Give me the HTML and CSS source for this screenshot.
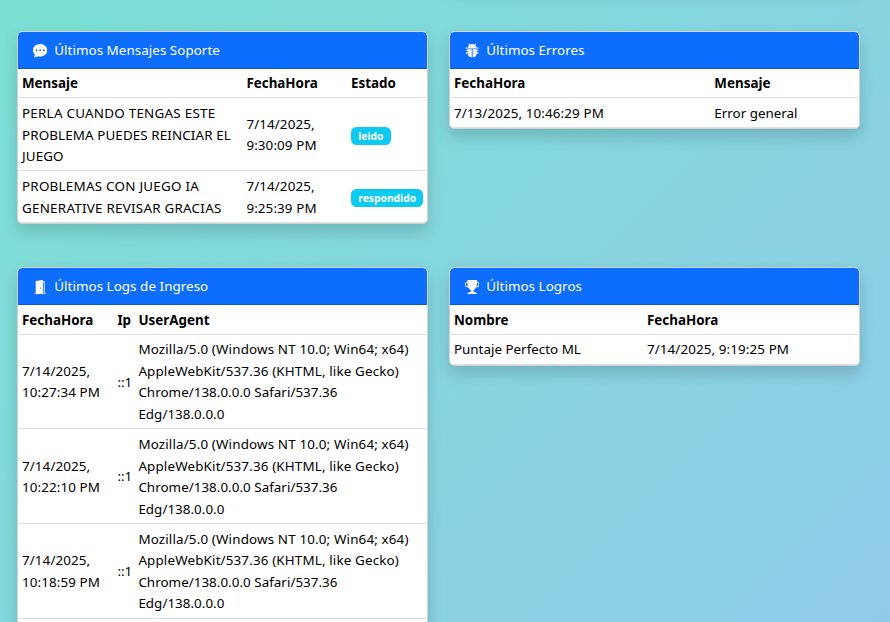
FILE: index.html
```html
<!DOCTYPE html>
<html lang="es">
<head>
<meta charset="utf-8">
<title>Panel</title>
<link rel="stylesheet" href="styles.css">
</head>
<body>
<main class="grid">
  <section class="card previous"></section>
  <section class="card previous"></section>

  <section class="card">
    <header class="card-header">
      <svg class="icon" viewBox="0 0 16 16"><path d="M16 8c0 3.866-3.582 7-8 7a9 9 0 0 1-2.347-.306c-.584.296-1.925.864-4.181 1.234-.2.032-.352-.176-.273-.362.354-.836.674-1.95.77-2.966C.744 11.37 0 9.76 0 8c0-3.866 3.582-7 8-7s8 3.134 8 7M5 8a1 1 0 1 0-2 0 1 1 0 0 0 2 0m4 0a1 1 0 1 0-2 0 1 1 0 0 0 2 0m3 1a1 1 0 1 0 0-2 1 1 0 0 0 0 2"/></svg>
      <span>Últimos Mensajes Soporte</span>
    </header>
    <table>
      <colgroup><col class="col-message"><col class="col-date"><col></colgroup>
      <thead><tr><th>Mensaje</th><th>FechaHora</th><th>Estado</th></tr></thead>
      <tbody>
        <tr><td><span class="wide">PERLA CUANDO TENGAS ESTE</span><br>PROBLEMA PUEDES REINCIAR EL<br>JUEGO</td><td>7/14/2025,<br>9:30:09 PM</td><td><span class="badge">leido</span></td></tr>
        <tr><td class="wide">PROBLEMAS CON JUEGO IA<br>GENERATIVE REVISAR GRACIAS</td><td>7/14/2025,<br>9:25:39 PM</td><td><span class="badge">respondido</span></td></tr>
      </tbody>
    </table>
  </section>

  <section class="card">
    <header class="card-header">
      <svg class="icon" viewBox="0 0 16 16"><path d="M4.978.855a.5.5 0 1 0-.956.29l.41 1.352A5 5 0 0 0 3 6h10a5 5 0 0 0-1.432-3.503l.41-1.352a.5.5 0 1 0-.956-.29l-.291.956A5 5 0 0 0 8 1a5 5 0 0 0-2.731.811l-.29-.956z"/><path d="M13 6v1H8.5v8.975A5 5 0 0 0 13 11h.5a.5.5 0 0 1 .5.5v.5a.5.5 0 1 0 1 0v-.5a1.5 1.5 0 0 0-1.5-1.5H13V9h1.5a.5.5 0 0 0 0-1H13V7h.5A1.5 1.5 0 0 0 15 5.5V5a.5.5 0 0 0-1 0v.5a.5.5 0 0 1-.5.5zm-5.5 9.975V7H3V6h-.5a.5.5 0 0 1-.5-.5V5a.5.5 0 0 0-1 0v.5A1.5 1.5 0 0 0 2.5 7H3v1H1.5a.5.5 0 0 0 0 1H3v1h-.5A1.5 1.5 0 0 0 1 11.5v.5a.5.5 0 1 0 1 0v-.5a.5.5 0 0 1 .5-.5H3a5 5 0 0 0 4.5 4.975"/></svg>
      <span>Últimos Errores</span>
    </header>
    <table>
      <colgroup><col class="col-error-date"><col></colgroup>
      <thead><tr><th>FechaHora</th><th>Mensaje</th></tr></thead>
      <tbody><tr><td>7/13/2025, 10:46:29 PM</td><td class="plain">Error general</td></tr></tbody>
    </table>
  </section>

  <section class="card">
    <header class="card-header">
      <svg class="icon" viewBox="0 0 16 16"><path d="M1.5 15a.5.5 0 0 0 0 1h13a.5.5 0 0 0 0-1H13V2.5A1.5 1.5 0 0 0 11.5 1H11V.5a.5.5 0 0 0-.57-.495l-7 1A.5.5 0 0 0 3 1.5V15zM11 2h.5a.5.5 0 0 1 .5.5V15h-1zm-2.5 8c-.276 0-.5-.448-.5-1s.224-1 .5-1 .5.448.5 1-.224 1-.5 1"/></svg>
      <span>Últimos Logs de Ingreso</span>
    </header>
    <table>
      <colgroup><col class="col-log-date"><col class="col-ip"><col></colgroup>
      <thead><tr><th>FechaHora</th><th>Ip</th><th>UserAgent</th></tr></thead>
      <tbody>
        <tr><td>7/14/2025,<br>10:27:34 PM</td><td class="plain">::1</td><td class="agent"><span class="agent-head">Mozilla/5.0 (Windows NT 10.0; Win64; x64)<br>AppleWebKit/537.36 (KHTML, like Gecko)</span><br>Chrome/138.0.0.0 Safari/537.36<br>Edg/138.0.0.0</td></tr>
        <tr><td>7/14/2025,<br>10:22:10 PM</td><td class="plain">::1</td><td class="agent"><span class="agent-head">Mozilla/5.0 (Windows NT 10.0; Win64; x64)<br>AppleWebKit/537.36 (KHTML, like Gecko)</span><br>Chrome/138.0.0.0 Safari/537.36<br>Edg/138.0.0.0</td></tr>
        <tr><td>7/14/2025,<br>10:18:59 PM</td><td class="plain">::1</td><td class="agent"><span class="agent-head">Mozilla/5.0 (Windows NT 10.0; Win64; x64)<br>AppleWebKit/537.36 (KHTML, like Gecko)</span><br>Chrome/138.0.0.0 Safari/537.36<br>Edg/138.0.0.0</td></tr>
        <tr class="next-row"><td></td><td></td><td></td></tr>
      </tbody>
    </table>
  </section>

  <section class="card">
    <header class="card-header">
      <svg class="icon" viewBox="0 0 16 16"><path d="M2.5.5A.5.5 0 0 1 3 0h10a.5.5 0 0 1 .5.5q0 .807-.034 1.536a3 3 0 1 1-1.133 5.89c-.79 1.865-1.878 2.777-2.833 3.011v2.173l1.425.356c.194.048.377.135.537.255L13.3 15.1a.5.5 0 0 1-.3.9H3a.5.5 0 0 1-.3-.9l1.838-1.379c.16-.12.343-.207.537-.255L6.5 13.11v-2.173c-.955-.234-2.043-1.146-2.833-3.012a3 3 0 1 1-1.132-5.89A33 33 0 0 1 2.5.5m.099 2.54a2 2 0 0 0 .72 3.935c-.333-1.05-.588-2.346-.72-3.935m10.083 3.935a2 2 0 0 0 .72-3.935c-.133 1.59-.388 2.885-.72 3.935"/></svg>
      <span>Últimos Logros</span>
    </header>
    <table>
      <colgroup><col class="col-name"><col></colgroup>
      <thead><tr><th>Nombre</th><th>FechaHora</th></tr></thead>
      <tbody><tr><td class="plain">Puntaje Perfecto ML</td><td>7/14/2025, 9:19:25 PM</td></tr></tbody>
    </table>
  </section>
</main>
</body>
</html>
```
FILE: styles.css
```css
* { box-sizing: border-box; }

html { height: 100%; overflow: hidden; }

body {
  margin: 0;
  height: 100%;
  overflow: hidden;
  background: linear-gradient(135deg, #7be0d3 0%, #8fcbe9 100%);
  color: #000;
  font-family: "Segoe UI", "Noto Sans", sans-serif;
  font-size: 13.4px;
  line-height: 21.6px;
}

.grid {
  display: grid;
  grid-template-columns: 410.4px 410.4px;
  column-gap: 21.6px;
  row-gap: 43.6px;
  align-items: start;
  padding-left: 17.4px;
  margin-top: -32.6px;
}

.card {
  border: 1px solid #d2d2d2;
  border-radius: 5.4px;
  background: #fff;
  box-shadow: 0 7.2px 14.4px rgba(0, 0, 0, .15);
  overflow: hidden;
}

.previous { height: 20px; }
.previous:first-child { visibility: hidden; }

.card-header {
  display: flex;
  align-items: center;
  gap: 7px;
  height: 37px;
  padding: 1.2px 14.4px 0;
  border-bottom: 1px solid #0b59d2;
  background: #0d6efd;
  color: #fff;
  letter-spacing: .05px;
}

.icon {
  width: 14.4px;
  height: 14.4px;
  fill: currentColor;
}

table {
  width: 100%;
  table-layout: fixed;
  border-collapse: separate;
  border-spacing: 0;
}

th, td {
  border-bottom: 1px solid #dee2e6;
  text-align: left;
  vertical-align: middle;
  white-space: nowrap;
}

th {
  padding: 4.4px 3.6px 2.3px;
  font-weight: 700;
}

td {
  padding: 4.7px 3.6px 2.5px;
  letter-spacing: .11px;
}

.plain { letter-spacing: 0; }
.wide { letter-spacing: .25px; }
.agent { padding-bottom: 2.7px; letter-spacing: .03px; }
.agent-head { letter-spacing: .15px; }
.next-row td { height: 94.8px; }
.card:last-child td { padding-bottom: 3px; }

.col-message { width: 224.4px; }
.col-date { width: 104.6px; }
.col-error-date { width: 260.4px; }
.col-log-date { width: 95.4px; }
.col-ip { width: 21px; }
.col-name { width: 193px; }

.badge {
  display: inline-block;
  padding: 3.8px 7.3px;
  border-radius: 5.4px;
  background: #0dcaf0;
  color: #fff;
  font-size: 10.3px;
  font-weight: 700;
  letter-spacing: 0;
  line-height: 10.8px;
  vertical-align: middle;
}
```
